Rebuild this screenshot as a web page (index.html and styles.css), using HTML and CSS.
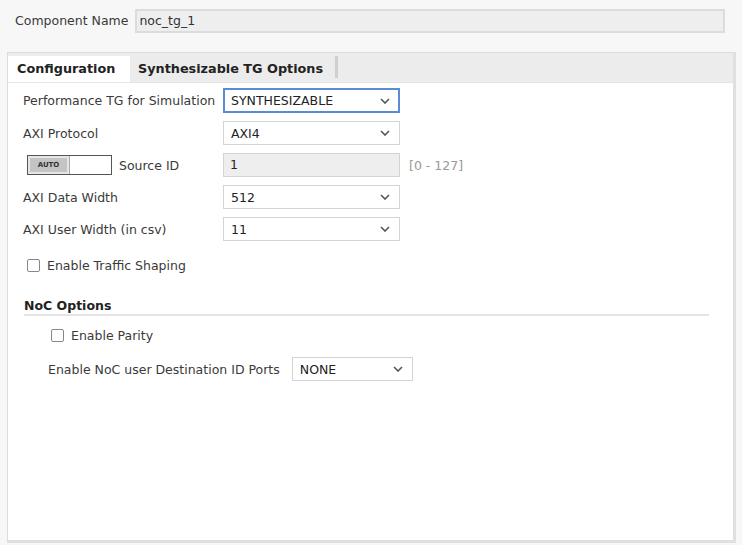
FILE: index.html
```html
<!DOCTYPE html>
<html>
<head>
<meta charset="utf-8">
<link rel="stylesheet" href="styles.css">
</head>
<body>
<div class="top">
  <span class="top-label">Component Name</span>
  <div class="name-input">noc_tg_1</div>
</div>
<div class="panel">
  <div class="tabs">
    <div class="tab active">Configuration</div>
    <div class="tab">Synthesizable TG Options</div>
    <div class="tab-sep"></div>
  </div>
  <div class="content">
    <div class="row r1">
      <span class="label">Performance TG for Simulation</span>
      <div class="select focus"><span>SYNTHESIZABLE</span><svg class="chev" width="10" height="6" viewBox="0 0 10 6"><path d="M1 1 L5 5 L9 1" fill="none" stroke="#555" stroke-width="1.6"/></svg></div>
    </div>
    <div class="row">
      <span class="label">AXI Protocol</span>
      <div class="select"><span>AXI4</span><svg class="chev" width="10" height="6" viewBox="0 0 10 6"><path d="M1 1 L5 5 L9 1" fill="none" stroke="#555" stroke-width="1.6"/></svg></div>
    </div>
    <div class="row">
      <div class="label toggle-label">
        <div class="toggle"><span class="auto">AUTO</span><span class="off"></span></div>
        <span>Source ID</span>
      </div>
      <div class="text-input disabled">1</div>
      <span class="range">[0 - 127]</span>
    </div>
    <div class="row">
      <span class="label">AXI Data Width</span>
      <div class="select"><span>512</span><svg class="chev" width="10" height="6" viewBox="0 0 10 6"><path d="M1 1 L5 5 L9 1" fill="none" stroke="#555" stroke-width="1.6"/></svg></div>
    </div>
    <div class="row">
      <span class="label">AXI User Width (in csv)</span>
      <div class="select"><span>11</span><svg class="chev" width="10" height="6" viewBox="0 0 10 6"><path d="M1 1 L5 5 L9 1" fill="none" stroke="#555" stroke-width="1.6"/></svg></div>
    </div>
    <div class="row check-row traffic">
      <span class="checkbox"></span>
      <span>Enable Traffic Shaping</span>
    </div>
    <div class="section">
      <div class="section-title">NoC Options</div>
      <div class="row check-row parity">
        <span class="checkbox"></span>
        <span>Enable Parity</span>
      </div>
      <div class="row dest">
        <span class="dest-label">Enable NoC user Destination ID Ports</span>
        <div class="select small"><span>NONE</span><svg class="chev" width="10" height="6" viewBox="0 0 10 6"><path d="M1 1 L5 5 L9 1" fill="none" stroke="#555" stroke-width="1.6"/></svg></div>
      </div>
    </div>
  </div>
</div>
</body>
</html>
```
FILE: styles.css
```css
html, body {
  margin: 0;
  padding: 0;
}
body {
  background: #f7f7f7;
  font-family: "DejaVu Sans", sans-serif;
  font-size: 12.5px;
  color: #3a3a3a;
  width: 742px;
  height: 545px;
  overflow: hidden;
}
.top {
  display: flex;
  align-items: center;
  padding: 9px 17px 0 15px;
  height: 24px;
}
.top-label {
  margin-right: 7px;
  margin-top: -2px;
}
.name-input {
  flex: 1;
  height: 20px;
  line-height: 20px;
  box-sizing: content-box;
  background: #eeeeee;
  border: 2px solid #dcdcdc;
  padding-left: 2px;
  color: #333;
}
.panel {
  margin: 19px 6px 0 7px;
  height: 487px;
  background: #fff;
  border: 1px solid #dcdcdc;
  border-right: 3px solid #e0e0e0;
  border-bottom: 3px solid #e0e0e0;
  display: flex;
  flex-direction: column;
}
.tabs {
  height: 29px;
  background: #ececec;
  display: flex;
  align-items: flex-end;
  border-bottom: 1px solid #e6e6e6;
}
.tab {
  height: 26px;
  line-height: 26px;
  font-weight: bold;
  font-size: 12.8px;
  color: #222;
  padding: 0 9px;
}
.tab.active {
  background: #fff;
  width: 104px;
  padding-left: 9px;
}
.tab + .tab {
  padding-left: 8px;
  padding-right: 12px;
}
.tab-sep {
  width: 3px;
  height: 22px;
  background: #cfcfcf;
  margin-bottom: 4px;
}
.content {
  flex: 1;
  padding: 5px 0 0 15px;
  display: flex;
  flex-direction: column;
}
.row {
  display: flex;
  align-items: center;
  height: 24px;
  margin-bottom: 8px;
}
.row.r1 {
  height: 25px;
}
.label {
  width: 200px;
  flex: none;
}
.select {
  width: 177px;
  height: 24px;
  box-sizing: border-box;
  border: 1px solid #d4d4d4;
  background: #fff;
  display: flex;
  align-items: center;
  justify-content: space-between;
  padding: 0 9px 0 7px;
  color: #222;
}
.select.focus {
  border: 2px solid #5b8ad6;
  height: 25px;
  padding-left: 6px;
  padding-right: 8px;
}
.select.small {
  width: 121px;
}
.chev {
  display: block;
}
.toggle-label {
  display: flex;
  align-items: center;
  padding-left: 4px;
  box-sizing: border-box;
}
.toggle {
  width: 85px;
  height: 20px;
  box-sizing: border-box;
  border: 1px solid #555;
  display: flex;
  margin-right: 7px;
}
.toggle .auto {
  width: 41px;
  background: #c4c4c4;
  border-right: 1px solid #aaa;
  font-size: 7px;
  font-weight: bold;
  color: #333;
  display: flex;
  align-items: center;
  justify-content: center;
  box-shadow: inset 0 0 0 2px #e6e6e6;
}
.toggle .off {
  flex: 1;
  background: #fff;
}
.text-input {
  width: 177px;
  height: 24px;
  line-height: 22px;
  box-sizing: border-box;
  border: 1px solid #d4d4d4;
  padding-left: 6px;
  color: #222;
}
.text-input.disabled {
  background: #eeeeee;
}
.range {
  margin-left: 9px;
  color: #999;
}
.check-row {
  display: flex;
  align-items: center;
}
.traffic {
  margin-top: 4px;
  padding-left: 4px;
}
.checkbox {
  width: 11px;
  height: 11px;
  border: 1px solid #888;
  border-radius: 2px;
  background: #fff;
  margin-right: 7px;
  flex: none;
}
.section {
  margin-top: 13px;
  padding-left: 1px;
  width: 685px;
}
.section-title {
  font-weight: bold;
  color: #222;
  padding-bottom: 1px;
  border-bottom: 2px solid #e4e4e4;
}
.parity {
  margin-top: 7px;
  padding-left: 27px;
}
.dest {
  padding-left: 24px;
  margin-top: 10px;
}
.dest-label {
  margin-right: 12px;
}
```
